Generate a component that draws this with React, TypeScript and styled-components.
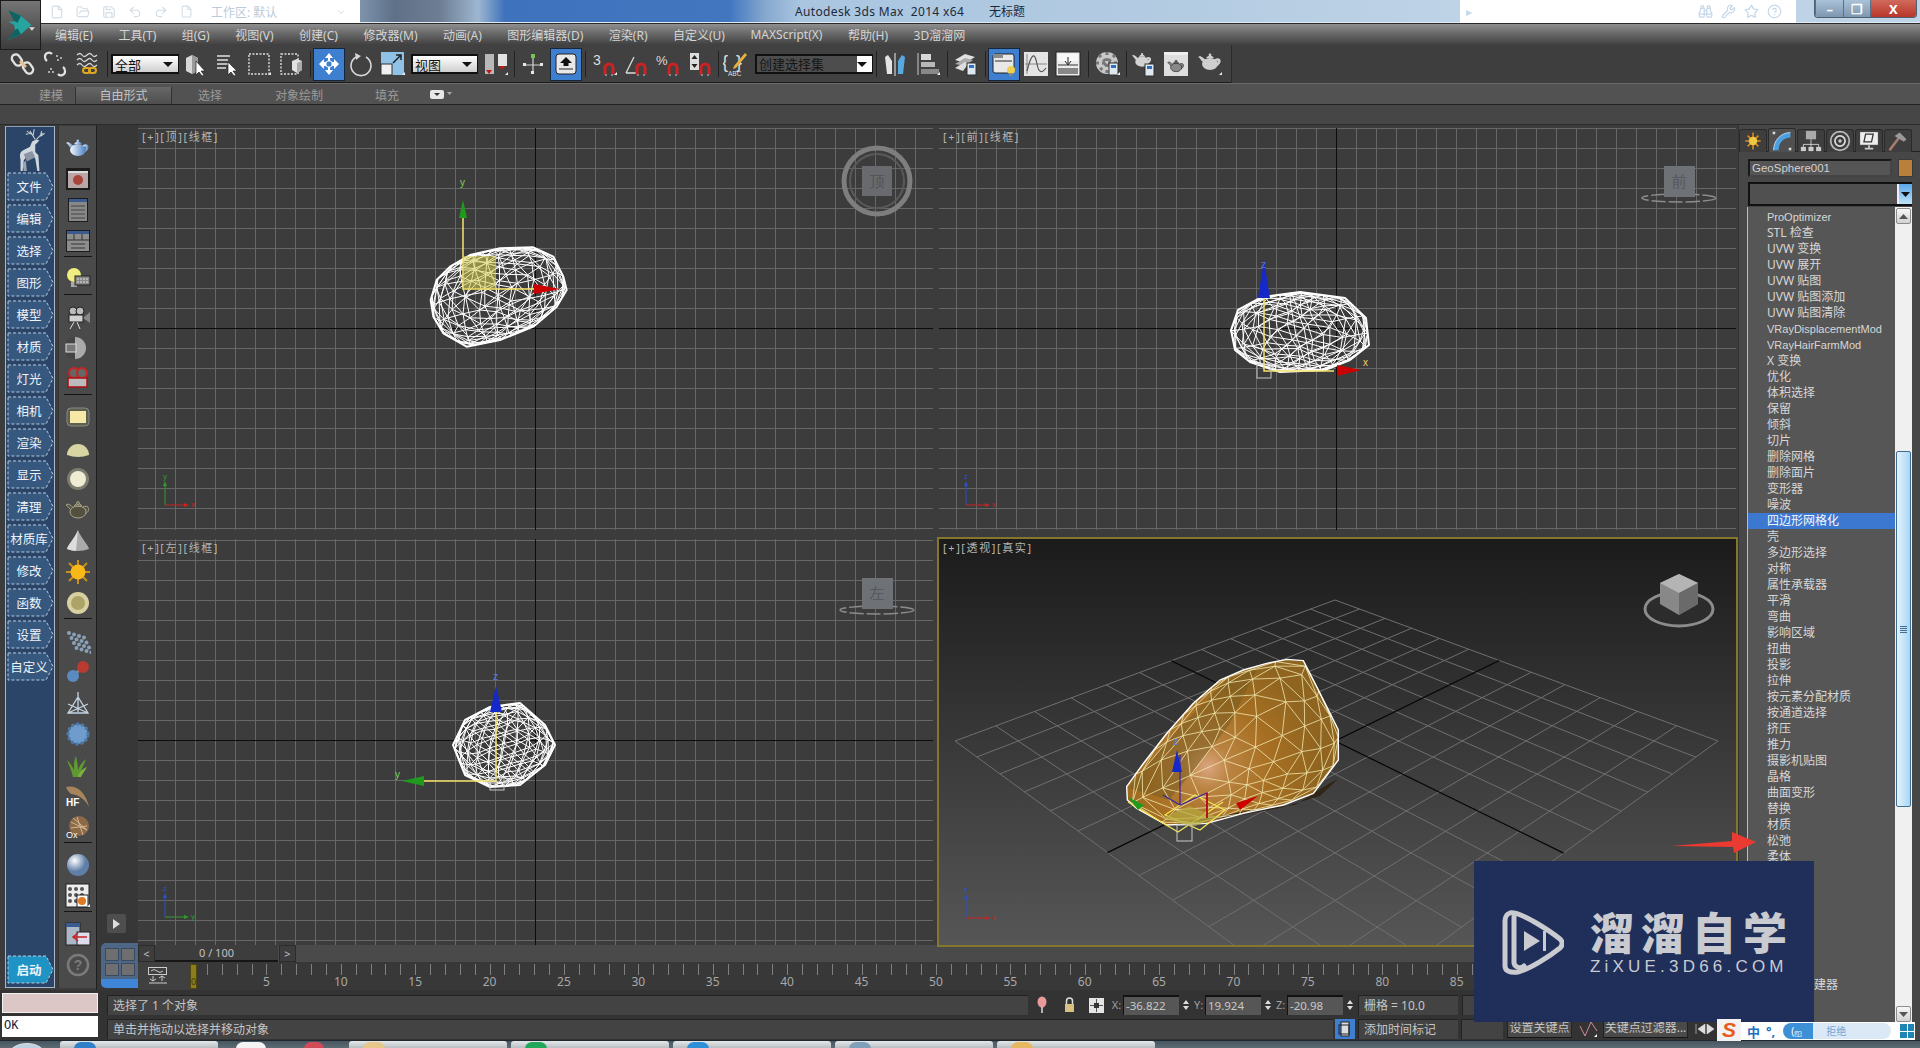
import React from 'react';
import styled, { createGlobalStyle } from 'styled-components';
import { File, FolderOpen, Save, Undo2, Redo2, Binoculars, Wrench, Star, CircleHelp, ChevronDown } from 'lucide-react';

const FONT = `"Noto Sans", "Noto Sans CJK SC", sans-serif`;

const Global = createGlobalStyle`
  html, body { margin: 0; padding: 0; background: #3a3a3a; }
  * { box-sizing: border-box; }
  body { font-family: ${FONT}; font-size: 12px; color: #ccc; overflow: hidden; }
`;

const Root = styled.div`position: relative; width: 1920px; height: 1048px; overflow: hidden; display: flex; flex-direction: column; background: #3c3c3c;`;

/* ---------- title ---------- */
const TitleBar = styled.div`
  height: 23px; display: flex; align-items: stretch; position: relative;
  background: linear-gradient(90deg, #7d93ac 360px, #5f7088 395px, #6d7e94 440px, #9db6d0 478px, #3f72bc 505px, #4277c0 730px, #86a8cf 765px, #a9c5e0 800px, #b4cce2 1200px, #bfd3e7 1460px);
  box-shadow: inset 0 -1px 0 #dfeaf4;
`;
const Qat = styled.div`width: 320px; margin-left: 40px; background: #fff; display: flex; align-items: center; gap: 12px; padding-left: 10px; color: #d2dde7; font-size: 12px;`;
const QatLabel = styled.span`margin-left: 6px; color: #bccad8; width: 112px;`;
const TitleText = styled.div`position: absolute; left: 795px; top: 1px; line-height: 21px; color: #1e2a38; font-size: 12px; white-space: pre; display: flex;`;
const TitleApp = styled.span`letter-spacing: 0.35px; width: 194px;`;
const InfoCenter = styled.div`margin-left: auto; margin-right: 124px; width: 336px; background: #fff; display: flex; align-items: center; color: #c6d8ea; padding: 0 14px 0 6px;`;
const InfoIcons = styled.div`margin-left: auto; display: flex; gap: 8px; align-items: center;`;
const WinButtons = styled.div`position: absolute; right: 3px; top: 0; width: 103px; height: 18px; display: flex; border: 1px solid #4d5f72; border-top: 0; border-radius: 0 0 4px 4px; overflow: hidden;`;
const WinBtn = styled.div<{ $w: number; $close?: boolean }>`
  width: ${p => p.$w}px; display: flex; align-items: center; justify-content: center;
  border-left: 1px solid #5d6f82; color: #fff; font-size: 13px; font-weight: 700;
  background: ${p => p.$close ? 'linear-gradient(#d06a5c, #b8352a)' : 'linear-gradient(#aac2d8, #7f97ae)'};
`;
const AppButton = styled.div`position: absolute; left: 0; top: 0; width: 41px; height: 50px; background: linear-gradient(#757575, #3c3c3c); border: 1px solid #1c1c1c; z-index: 3; display: flex; align-items: center; justify-content: center;`;

/* ---------- menu ---------- */
const MenuBar = styled.div`height: 22px; background: linear-gradient(#8f8f8f, #6d6d6d 40%, #404040); border-top: 1px solid #2a2a2a; display: flex; align-items: center; padding-left: 55px; gap: 25.5px; color: #d4d4d4; font-size: 12px; white-space: nowrap;`;

/* ---------- toolbar ---------- */
const Toolbar = styled.div`height: 38px; width: 1232px; display: flex; align-items: center; padding-left: 7px; background: #414141; border-right: 1px solid #2a2a2a; box-shadow: inset 0 -1px 0 #1c1c1c;`;
const ToolbarRow = styled.div`height: 38px; background: #3e3e3e; display: flex;`;
const ToolBtn = styled.div<{ $on?: boolean }>`
  width: 32px; height: 33px; display: flex; align-items: center; justify-content: center; flex: none;
  background: ${p => p.$on ? '#3f7fd0' : 'transparent'};
  box-shadow: ${p => p.$on ? 'inset 0 0 0 1px #16263c' : 'none'};
`;
const Gap = styled.div<{ $w: number; $line?: boolean }>`
  width: ${p => p.$w}px; height: 26px; flex: none; position: relative;
  ${p => p.$line ? `background: linear-gradient(#222,#222) center / 1px 100% no-repeat;` : ''}
`;
const Select = styled.div<{ $w: number; $dark?: boolean }>`
  width: ${p => p.$w}px; height: 20px; flex: none; background: ${p => p.$dark ? '#fff' : 'linear-gradient(#fff, #cfcfcf)'};
  border: 2px solid #111; border-right-width: 1px; display: flex; align-items: center; color: #111; font-size: 13px; padding-left: 2px; position: relative;
`;
const SelectInner = styled.div`flex: 1; height: 100%; background: #4d4d4d; color: #151515; line-height: 16px; padding-left: 2px; margin-left: -2px;`;
const SelectArrow = styled.span`margin-left: auto; margin-right: 5px; width: 0; height: 0; border-left: 5px solid transparent; border-right: 5px solid transparent; border-top: 5px solid #111;`;

/* ---------- ribbon ---------- */
const RibbonTabs = styled.div`height: 22px; background: #525252; display: flex; padding-left: 27px; border-top: 1px solid #6b6b6b; border-bottom: 1px solid #222; color: #9a9a9a; font-size: 12px; position: relative;`;
const RibbonTab = styled.div<{ $w: number; $on?: boolean }>`
  width: ${p => p.$w}px; text-align: center; line-height: 17px; margin-top: 3px; height: 17px;
  background: ${p => p.$on ? 'linear-gradient(#686868, #4e4e4e)' : 'transparent'};
  color: ${p => p.$on ? '#c4c4c4' : '#9a9a9a'};
  box-shadow: ${p => p.$on ? 'inset 1px 0 0 #333, inset -1px 0 0 #333' : 'none'};
`;
const RibbonPanel = styled.div`height: 20px; background: #464646; border-bottom: 1px solid #2a2a2a;`;
const TabIcon = styled.div`display: flex; align-items: center; gap: 3px; padding-left: 6px;`;

/* ---------- main ---------- */
const Main = styled.div`flex: 1; display: flex; min-height: 0;`;
const LeftArea = styled.div`width: 1738px; display: flex; flex-direction: column;`;
const UpperRow = styled.div`height: 865px; display: flex;`;
const BlueRail = styled.div`width: 50px; height: 862px; margin: 1px 0 0 5px; background: #2a4568; border: 1px solid #a9b8c8; border-top-color: #8a9cb0; display: flex; flex-direction: column; align-items: flex-start; position: relative;`;
const DeerBox = styled.div`height: 45px; width: 100%; display: flex; align-items: center; justify-content: center;`;
const Chip = styled.div<{ $start?: boolean }>`
  position: relative; width: 47px; height: 29px; margin: 0 0 3px 1px; display: flex; align-items: center; justify-content: center;
  padding-right: 3px; color: #eef3f8; font-size: 12.5px; white-space: nowrap;
  font-weight: ${p => p.$start ? 700 : 400};
`;
const ChipLabel = styled.span`position: relative; letter-spacing: 0;`;
const ChipShape = styled.svg`position: absolute; inset: 0;`;
const Spacer = styled.div`flex: 1;`;
const IconRail = styled.div`width: 38px; margin: 1px 0 0 3px; background: #4a4a4a; border-left: 1px solid #333; height: 862px; padding-top: 6px; display: flex; flex-direction: column; align-items: center;`;
const RailCell = styled.div`height: 31px; width: 100%; display: flex; align-items: center; justify-content: center; flex: none;`;
const RailSep = styled.div`height: 1px; width: 28px; background: #151515; margin-bottom: 6px; flex: none;`;
const DarkRail = styled.div`width: 42px; border-left: 1px solid #1f1f1f; background: #373737; display: flex; flex-direction: column; align-items: flex-end;`;
const PlayBtn = styled.div`width: 19px; height: 19px; margin: 0 12px 10px 0; background: #4e4e4e; border-radius: 2px; display: flex; align-items: center; justify-content: center;`;
const LayoutBtn = styled.div`width: 37px; height: 45px; margin-bottom: 2px; border-radius: 5px 0 0 5px; background: linear-gradient(#4e6787 80%, #3f86d8 80%); display: grid; grid-template-columns: 14px 14px; grid-template-rows: 13px 13px; gap: 2px; padding: 5px 0 0 4px;`;
const LayoutCell = styled.div`background: #6f6f72; border: 1px solid #3a4a5c;`;

const ContentCol = styled.div`width: 1600px; display: flex; flex-direction: column;`;
const ViewGrid = styled.div`display: grid; grid-template-columns: 795px 797px; grid-template-rows: 402px 406px; gap: 9px 6px; padding-top: 3px;`;
const Viewport = styled.div<{ $ax: number; $ay: number }>`
  position: relative; overflow: hidden; background-color: #3c3c3c;
  background-image: linear-gradient(#0c0c0c,#0c0c0c), linear-gradient(#0c0c0c,#0c0c0c), linear-gradient(#676767 1px, transparent 1px), linear-gradient(90deg, #676767 1px, transparent 1px);
  background-size: 1px 100%, 100% 1px, 20px 20px, 20px 20px;
  background-repeat: no-repeat, no-repeat, repeat, repeat;
  background-position: ${p => p.$ax}px 0, 0 ${p => p.$ay}px, 0 ${p => p.$ay % 20}px, ${p => p.$ax % 20}px 0;
`;
const PerspView = styled.div`position: relative; overflow: hidden; background: linear-gradient(#1b1b1b, #565656); outline: 2px solid #85762f; outline-offset: 0;`;
const ViewSvg = styled.svg`position: absolute; inset: 0; width: 100%; height: 100%;`;
const ViewLabel = styled.div`position: absolute; left: 4px; top: 1px; color: #b4b4b4; font-size: 11px; line-height: 16px; letter-spacing: 1.6px; white-space: nowrap;`;

const SliderRow = styled.div`height: 17px; display: flex; background: #4a4a4a; color: #c0c0c0; font-size: 11px; align-items: stretch;`;
const SliderEnd = styled.div`width: 17px; background: #3d3d3d; text-align: center; line-height: 16px; border: 1px solid #2c2c2c;`;
const SliderThumb = styled.div`width: 123px; background: #3d3d3d; border-bottom: 2px solid #161616; text-align: center; line-height: 16px; margin-right: 1px;`;
const TrackRow = styled.div`height: 28px; display: flex; background: #404040;`;
const TrackIcon = styled.div`width: 54px; display: flex; align-items: center; justify-content: flex-start; padding-left: 10px;`;
const Ruler = styled.div`
  flex: 1; position: relative; display: flex; align-items: flex-end; padding-bottom: 0; background-color: #383838;
  background-image: repeating-linear-gradient(90deg, #808080 0 1px, transparent 1px 14.88px);
  background-size: 100% 11px; background-repeat: no-repeat; background-position: 0 2px; color: #a8a8a8; font-size: 12px;
`;
const RulerCell = styled.div`width: 74.4px; flex: none; display: flex; justify-content: flex-end; line-height: 16px;`;
const RulerNum = styled.span`transform: translateX(50%);`;
const KeyMark = styled.div`position: absolute; left: -2px; top: 2px; width: 7px; height: 25px; background: #8d7d1c; border: 1px solid #4f4610; color: #3d3508; font-size: 9px; text-align: center; line-height: 34px; overflow: hidden;`;

/* ---------- status ---------- */
const StatusArea = styled.div`height: 50px; display: flex; background: #333;`;
const Listener = styled.div`width: 107px; padding: 3px 9px 0 2px; display: flex; flex-direction: column; gap: 3px;`;
const ListenerTop = styled.div`height: 20px; background: #dcc6c6; border: 1px solid #f2f2f2;`;
const ListenerBottom = styled.div`height: 21px; background: #fff; color: #10103a; font-family: "Liberation Mono", monospace; font-size: 12px; line-height: 21px; padding-left: 2px;`;
const StatusRows = styled.div`flex: 1; display: flex; flex-direction: column; gap: 4px; padding-top: 5px;`;
const StatusRow = styled.div`height: 20px; display: flex; align-items: stretch; flex: none; color: #c6c6c6; font-size: 12px;`;
const StatusBox = styled.div<{ $w: number; $ml?: number }>`
  width: ${p => p.$w}px; margin-left: ${p => p.$ml ?? 0}px; flex: none; background: #434343; border-top: 1px solid #222; border-left: 1px solid #222;
  padding-left: 5px; line-height: 20px; white-space: nowrap; overflow: hidden;
`;
const IconSlot = styled.div<{ $w: number; $ml?: number; $on?: boolean }>`
  width: ${p => p.$w}px; margin-left: ${p => p.$ml ?? 0}px; flex: none; display: flex; align-items: center; justify-content: center;
  background: ${p => p.$on ? '#3f7fd0' : 'transparent'};
`;
const AxisLabel = styled.div`width: 13px; flex: none; color: #a0a0a0; font-size: 11px; line-height: 20px; text-align: center;`;
const Field = styled.div`width: 56px; flex: none; background: #565656; border-top: 2px solid #111; border-left: 1px solid #111; color: #c8c8c8; font-size: 11.5px; line-height: 18px; padding-left: 2px;`;
const Spin = styled.div`width: 13px; flex: none; display: flex; flex-direction: column; align-items: center; justify-content: center; gap: 2px;`;
const SpinUp = styled.span`width: 0; height: 0; border-left: 3px solid transparent; border-right: 3px solid transparent; border-bottom: 4px solid #ddd;`;
const SpinDown = styled.span`width: 0; height: 0; border-left: 3px solid transparent; border-right: 3px solid transparent; border-top: 4px solid #ddd;`;
const KeyBtn = styled.div<{ $w: number; $ml?: number }>`
  width: ${p => p.$w}px; margin-left: ${p => p.$ml ?? 0}px; flex: none; background: #4a4a4a; border-bottom: 1px solid #161616; border-left: 1px solid #222; border-right: 1px solid #222; text-align: center; line-height: 18px; height: 19px; white-space: nowrap; overflow: hidden;
`;

/* ---------- right panel ---------- */
const RightPanel = styled.div`width: 182px; background: #474747; display: flex; flex-direction: column; padding-top: 3px; position: relative; border-left: 1px solid #333;`;
const PanelTabs = styled.div`height: 24px; display: flex; gap: 1px; padding-left: 0; border-bottom: 1px solid #222; flex: none;`;
const PanelTab = styled.div<{ $on?: boolean }>`
  width: 28px; height: ${p => p.$on ? 24 : 23}px; margin-top: ${p => p.$on ? 0 : 1}px; background: ${p => p.$on ? '#505050' : '#3e3e3e'}; border: 1px solid #2a2a2a; border-bottom: 0; border-radius: 3px 3px 0 0; display: flex; align-items: center; justify-content: center;
`;
const NameRow = styled.div`height: 18px; margin: 7px 0 0 9px; display: flex; flex: none;`;
const NameField = styled.div`width: 144px; background: #555; border: 2px solid #191919; border-right-color: #444; border-bottom-color: #444; color: #d0d0d0; font-family: "Liberation Sans", sans-serif; font-size: 11.5px; line-height: 14px; padding-left: 2px;`;
const Swatch = styled.div`width: 15px; margin-left: 6px; background: #b9803c; border: 1px solid #3a3a3a;`;
const StackBox = styled.div`height: 24px; margin: 5px 8px 0 9px; display: flex; background: #505050; border: 2px solid #111; border-right: 0; flex: none;`;
const StackArrow = styled.div`margin-left: auto; width: 15px; background: linear-gradient(#5aa8e8, #bfe2f8); display: flex; align-items: center; justify-content: center; border-left: 2px solid #eef;`;
const ListWrap = styled.div`height: 816px; margin: 1px 8px 0 8px; display: flex; border-left: 1px solid #bcbcbc; flex: none;`;
const ListRows = styled.div`flex: 1; background: #565656; overflow: hidden; padding-top: 2px;`;
const ListRow = styled.div<{ $on?: boolean; $latin?: boolean; $indent?: number }>`
  height: 16px; line-height: 16px; padding-left: ${p => p.$indent ?? 19}px; white-space: nowrap; color: ${p => p.$on ? '#f4f8ff' : '#d6d6d6'};
  font-size: ${p => p.$latin ? 11 : 12}px;
  font-family: ${p => p.$latin ? '"Liberation Sans", sans-serif' : 'inherit'};
  background: ${p => p.$on ? '#3c78d0' : 'transparent'};
`;
const ScrollTrack = styled.div`width: 17px; background: #f0f0f0; display: flex; flex-direction: column; align-items: center; flex: none;`;
const ScrollBtn = styled.div`width: 15px; height: 16px; margin-top: 1px; background: linear-gradient(#f6f6f6, #d2d2d2); border: 1px solid #8d8d8d; border-radius: 2px; display: flex; align-items: center; justify-content: center; flex: none;`;
const ScrollGap = styled.div<{ $h: number }>`height: ${p => p.$h}px; flex: none;`;
const ScrollThumb = styled.div`width: 15px; height: 356px; flex: none; background: linear-gradient(90deg, #e4f3fd, #a8d6f5); border: 1px solid #3f6f92; border-radius: 2px; display: flex; align-items: center; justify-content: center;`;
const Grip = styled.div`width: 7px; height: 7px; background: repeating-linear-gradient(#3f6f92 0 1px, transparent 1px 2px);`;

/* ---------- overlays ---------- */
const RedArrow = styled.svg`position: absolute; left: 1666px; top: 826px; z-index: 5;`;
const Watermark = styled.div`position: absolute; left: 1474px; top: 861px; width: 340px; height: 161px; background: #1f2f5a; display: flex; align-items: center; padding: 0 0 0 26px; gap: 26px; z-index: 6;`;
const MarkText = styled.div`display: flex; flex-direction: column; align-items: flex-start; color: #c9cbd0;`;
const MarkTitle = styled.div`font-family: "Noto Sans CJK SC", sans-serif; font-size: 44px; font-weight: 900; letter-spacing: 7px; line-height: 50px; white-space: nowrap;`;
const MarkSub = styled.div`font-family: "Liberation Sans", sans-serif; font-size: 17px; letter-spacing: 4.2px; line-height: 20px; white-space: nowrap; margin-top: 1px;`;
const ImeBar = styled.div`position: absolute; left: 1717px; top: 1022px; width: 198px; height: 18px; background: #fff; display: flex; align-items: center; z-index: 7; padding-left: 0; color: #1f6fc0;`;
const ImeS = styled.div`width: 24px; height: 22px; margin-top: -3px; background: #f2f2f2; color: #e8591c; font-family: "Liberation Sans", sans-serif; font-weight: 900; font-size: 21px; line-height: 22px; text-align: center; font-style: italic;`;
const ImeText = styled.span`font-weight: 700; font-size: 13px; margin-left: 6px;`;
const ImePill = styled.div`margin-left: 8px; width: 108px; height: 16px; border-radius: 8px; background: linear-gradient(90deg, #3d8fd6 28%, #dbe9f6 28%); color: #fff; font-size: 10px; line-height: 16px; padding-left: 8px; display: flex; align-items: center; gap: 24px;`;
const ImeHint = styled.span`color: #6fa8d8; font-size: 10px;`;
const ImeGrid = styled.div`margin-left: auto; width: 14px; height: 14px; margin-right: 1px; display: grid; grid-template-columns: 1fr 1fr; gap: 1px;`;
const ImeDot = styled.div`background: #1f86b4;`;

const Taskbar = styled.div`height: 8px; display: flex; background: linear-gradient(#46555f, #5d6b74); border-top: 1px solid #20282e; overflow: hidden;`;
const Orb = styled.div`width: 34px; height: 20px; margin: 2px 0 0 10px; border-radius: 50%; background: #bcd0e2; border: 1px solid #ddd; flex: none;`;
const TaskTab = styled.div<{ $w: number; $ml: number }>`width: ${p => p.$w}px; margin-left: ${p => p.$ml}px; flex: none; background: linear-gradient(#e4e8ea, #b8bec2); border-radius: 3px 3px 0 0; display: flex; padding-left: 14px;`;
const TaskDot = styled.div<{ $c: string; $w?: number; $ml?: number }>`width: ${p => p.$w ?? 22}px; height: 16px; margin-left: ${p => p.$ml ?? 0}px; margin-top: 1px; border-radius: 7px; background: ${p => p.$c}; flex: none;`;

/* ---------- icons ---------- */
const I: React.FC<{ children: React.ReactNode; s?: number; v?: string }> = ({ children, s = 26, v = '0 0 26 26' }) => (
  <svg width={s} height={s} viewBox={v}>{children}</svg>
);
const Pot: React.FC<{ c?: string; st?: string }> = ({ c = '#cfd3d8', st = 'none' }) => (
  <g fill={c} stroke={st}>
    <path d="M7 13C4 13 4 9 1 8l2-1c3 1 4 3 6 4z" />
    <path d="M18 10c6-3 8 4 2 7l-1-2c3-2 2-4-1-3z" />
    <ellipse cx="13" cy="15" rx="8" ry="6" />
    <path d="M9 9h8l-2-2h-4z" /><circle cx="13" cy="6" r="1.4" />
  </g>
);
const corner = <path d="M22 24l3-3v3z" fill="#eee" />;
const Magnet = () => <g fill="none" stroke="#d8d8d8" strokeWidth="2"><path d="M13 24v-7a4 4 0 0 1 8 0v7" stroke="#c22" strokeWidth="3" /><path d="M13 24h2M19 24h2" stroke="#789" strokeWidth="2" /></g>;

const ToolIcons: Record<string, React.ReactNode> = {
  link: <I><g fill="none" stroke="#e2e2e2" strokeWidth="2.4"><rect x="3" y="3" width="8" height="12" rx="4" transform="rotate(-35 7 9)" /><rect x="14" y="11" width="8" height="12" rx="4" transform="rotate(-35 18 17)" /></g><path d="M10 10l6 6" stroke="#e8c090" strokeWidth="2.5" /></I>,
  unlink: <I><g fill="none" stroke="#e2e2e2" strokeWidth="2.2"><path d="M10 3a4 4 0 0 0-7 3 5 5 0 0 0 2 4" /><path d="M16 23a4 4 0 0 0 7-3 5 5 0 0 0-2-4" /></g><g fill="#aaa"><rect x="14" y="4" width="2" height="2" /><rect x="18" y="6" width="2" height="2" /><rect x="15" y="8" width="2" height="2" /><rect x="8" y="17" width="2" height="2" /><rect x="6" y="20" width="2" height="2" /><rect x="10" y="20" width="2" height="2" /></g></I>,
  bind: <I><g fill="none" stroke="#d4d4d4" strokeWidth="1.3"><path d="M3 4q3-3 5 0t5 0 5 0 5 0" /><path d="M3 9q3-3 5 0t5 0 5 0 5 0" /><path d="M3 14q3-3 5 0t5 0 5 0 5 0" /></g><g fill="none" stroke="#e0a820" strokeWidth="2"><rect x="9" y="17" width="7" height="5" rx="2.4" /><rect x="15" y="17" width="7" height="5" rx="2.4" /></g></I>,
  selObj: <I><path d="M4 7l6-3 6 3v13l-6 3-6-3z" fill="#d8d8d8" /><path d="M10 4l6 3v13l-6 3z" fill="#9a9a9a" /><path d="M14 10v14l3-3 3 4 2-1-3-4h4z" fill="#fff" stroke="#222" strokeWidth=".7" /></I>,
  selName: <I><path d="M3 5h13M3 9h11M3 13h13M3 17h9" stroke="#e0e0e0" strokeWidth="1.4" /><path d="M14 11v13l3-3 3 4 2-1-3-4h4z" fill="#fff" stroke="#222" strokeWidth=".7" /></I>,
  rect: <I><rect x="3" y="3" width="20" height="20" fill="none" stroke="#e0e0e0" strokeWidth="1.4" strokeDasharray="2 1.5" />{corner}</I>,
  win: <I><rect x="3" y="3" width="17" height="20" fill="none" stroke="#e0e0e0" strokeWidth="1.4" strokeDasharray="2 1.5" /><path d="M14 10l5-2 5 2v9l-5 3-5-3z" fill="#e2e2e2" /><path d="M19 12l5-2v9l-5 3z" fill="#aaa" /></I>,
  move: <I><path d="M13 2l4 5h-3v4h4v-3l5 5-5 5v-3h-4v4h3l-4 5-4-5h3v-4H8v3l-5-5 5-5v3h4V7H9z" fill="#fff" /><rect x="10" y="10" width="6" height="6" rx="2" fill="#3f7fd0" stroke="#fff" /></I>,
  rotate: <I><path d="M8 6a10 10 0 1 0 10 0" fill="none" stroke="#d6d6d6" strokeWidth="1.6" /><path d="M7 2l6 3-5 4z" fill="#d6d6d6" /></I>,
  scale: <I><rect x="1" y="1" width="23" height="23" fill="#8fc2e6" /><rect x="1" y="13" width="11" height="11" fill="#f0f0f0" stroke="#333" /><path d="M13 12l8-8M16 4h5v5" fill="none" stroke="#222" strokeWidth="1.5" />{corner}</I>,
  pivot: <I><rect x="2" y="3" width="9" height="20" fill="#b8b8b8" /><rect x="15" y="3" width="9" height="12" fill="#e2e2e2" /><path d="M6 23l-3-4h6z M19 19l-3-4h6z" fill="#c01818" />{corner}</I>,
  axis: <I><path d="M13 4v18M3 14h20" stroke="#d4d4d4" strokeWidth="1.2" /><rect x="11" y="3" width="4" height="4" fill="#7cc050" /><rect x="3" y="12" width="3" height="3" fill="#e8e8e8" /><rect x="20" y="12" width="3" height="3" fill="#e8e8e8" /><rect x="11" y="20" width="3" height="3" fill="#e8e8e8" /></I>,
  manip: <I><rect x="3" y="3" width="20" height="20" rx="3" fill="#e8e8e8" stroke="#222" /><path d="M13 6l6 6h-3.500v3h-5v-3H7z" fill="#111" /><rect x="6" y="17" width="14" height="2" fill="#888" /></I>,
  snap3: <I><text x="1" y="14" fontSize="14" fill="#ddd" fontFamily="Liberation Sans">3</text><Magnet />{corner}</I>,
  snapA: <I><path d="M2 22L10 6M2 22h11" stroke="#ddd" fill="none" strokeWidth="1.3" /><Magnet /></I>,
  snapP: <I><text x="0" y="14" fontSize="13" fill="#ddd" fontFamily="Liberation Sans">%</text><Magnet /></I>,
  snapS: <I><rect x="2" y="2" width="9" height="17" fill="#ddd" /><path d="M6.500 4l3 4h-6zM6.500 17l3-4h-6z" fill="#222" /><Magnet /></I>,
  named: <I><text x="-1" y="17" fontSize="18" fill="#ddd" fontFamily="Liberation Sans">{'{'}</text><text x="13" y="17" fontSize="18" fill="#ddd" fontFamily="Liberation Sans">{'}'}</text><path d="M22 2L11 15l-1 3 3-1L24 4z" fill="#e8b040" /><text x="5" y="25" fontSize="6.500" fill="#ddd" fontFamily="Liberation Sans">ABC</text></I>,
  mirror: <I><path d="M3 6l3-2 4 6v13H5z" fill="#e4e4e4" /><path d="M13 2v23" stroke="#eee" /><path d="M23 6l-3-2-4 6v13h5z" fill="#5aa8e0" /></I>,
  align: <I><path d="M3 2v22" stroke="#ccc" /><rect x="6" y="3" width="10" height="6" fill="#d8d8d8" /><rect x="6" y="11" width="14" height="5" fill="#b8b8b8" /><rect x="6" y="18" width="18" height="5" fill="#888" />{corner}</I>,
  layers: <I><path d="M2 9l10-6 10 3-10 6z" fill="#e0e0e0" /><path d="M2 13l10-6 8 2-8 6z" fill="#aaa" /><path d="M2 17l10-6 4 1-6 8z" fill="#ddd" /><rect x="14" y="12" width="9" height="12" fill="#dfe8f0" stroke="#333" /><rect x="16" y="14" width="5" height="3" fill="#2f6fc0" /></I>,
  scene: <I><rect x="2" y="3" width="21" height="19" rx="2" fill="#e8e8e8" stroke="#222" /><rect x="2" y="3" width="10" height="4" fill="#8a8a8a" /><rect x="4" y="9" width="17" height="2" fill="#8a8a8a" /><circle cx="20" cy="19" r="4" fill="#f0d050" /><rect x="18.500" y="22" width="3" height="3" fill="#888" /></I>,
  curve: <I><rect x="1" y="1" width="24" height="24" fill="#e4e4e4" /><path d="M4 3v20M2 13h22" stroke="#888" /><path d="M4 20C9 0 12 2 14 13s6 8 9 4" fill="none" stroke="#555" strokeWidth="1.2" /></I>,
  schem: <I><rect x="1" y="1" width="24" height="24" fill="#ececec" stroke="#222" /><rect x="3" y="3" width="20" height="7" fill="#f8f8f8" /><rect x="3" y="17" width="20" height="6" fill="#888" /><path d="M13 6v7M10 10l3 4 3-4" stroke="#222" fill="none" /><path d="M3 14h20" stroke="#333" /></I>,
  mat: <I><circle cx="12" cy="12" r="11" fill="#c8c8c8" /><path d="M12 1v22M1 12h22M4 4l16 16M20 4L4 20" stroke="#777" strokeWidth="3" strokeDasharray="3 3" /><rect x="14" y="12" width="9" height="12" fill="#dfe8f0" stroke="#333" /><rect x="16" y="14" width="5" height="3" fill="#2f6fc0" />{corner}</I>,
  renderSet: <I><g transform="translate(0 -2) scale(.85)"><Pot c="#d2d2d2" /></g><rect x="14" y="13" width="9" height="12" fill="#dfe8f0" stroke="#333" /><rect x="16" y="15" width="5" height="3" fill="#2f6fc0" /></I>,
  renderFrame: <I><rect x="1" y="1" width="24" height="24" fill="#dedede" /><rect x="1" y="1" width="24" height="3" fill="#eee" /><g transform="translate(4 6) scale(.7)"><Pot c="#888" st="#333" /></g></I>,
  render: <I><g transform="translate(0 -2)"><Pot c="#cfcfcf" /></g>{corner}</I>,
};

const railIcons: (React.ReactNode | 'sep')[] = [
  <I key="a"><defs><linearGradient id="bp" x1="0" y1="0" x2="1" y2="0"><stop offset="0" stopColor="#f4f8ff" /><stop offset="1" stopColor="#4a7fc0" /></linearGradient></defs><Pot c="url(#bp)" /></I>,
  <I key="b"><rect x="1" y="2" width="24" height="22" fill="#1c1c1c" /><rect x="3" y="5" width="20" height="17" fill="#b9a6a6" /><path d="M3 5h20v2H3z" fill="#dcdcdc" /><circle cx="13" cy="14" r="5" fill="#a8443a" /></I>,
  <I key="c"><rect x="3" y="1" width="20" height="24" fill="#1c1c1c" /><rect x="4" y="2" width="18" height="3" fill="#3a5a90" /><rect x="4" y="5" width="18" height="19" fill="#888" /><path d="M6 9h14M6 13h14M6 17h14M6 21h14" stroke="#444" /></I>,
  <I key="d"><rect x="1" y="2" width="24" height="22" fill="#1c1c1c" /><rect x="2" y="3" width="22" height="3" fill="#3a5a90" /><rect x="2" y="6" width="22" height="17" fill="#8d8d8d" /><path d="M2 12h22M9 6v6M17 6v6M6 16h14M6 20h14" stroke="#333" /></I>,
  'sep',
  <I key="e"><circle cx="9" cy="9" r="7" fill="#f0ee80" /><rect x="6" y="16" width="6" height="5" fill="#aaa" /><rect x="10" y="10" width="15" height="9" fill="#888" stroke="#222" /><path d="M12 13h11M12 16h11" stroke="#ddd" strokeDasharray="2 1" /></I>,
  'sep',
  <I key="f"><circle cx="8" cy="7" r="4" fill="#bbb" stroke="#222" /><circle cx="15" cy="7" r="4" fill="#bbb" stroke="#222" /><rect x="4" y="11" width="14" height="7" fill="#d0d0d0" stroke="#222" /><path d="M18 14l7-6v11z" fill="#888" /><path d="M9 18l-4 7M12 18l3 7" stroke="#ddd" /></I>,
  <I key="g"><path d="M10 2a11 11 0 0 1 0 22z" fill="#aaa" /><path d="M10 2a11 11 0 0 0 0 22z" fill="#444" /><rect x="1" y="9" width="10" height="8" fill="#777" stroke="#ddd" /></I>,
  <I key="h"><circle cx="9" cy="7" r="5" fill="#666" stroke="#c22" strokeWidth="2" /><circle cx="17" cy="7" r="5" fill="#666" stroke="#c22" strokeWidth="2" /><rect x="3" y="12" width="19" height="9" fill="#bbb" stroke="#a11" strokeWidth="1.500" /></I>,
  'sep',
  <I key="i"><rect x="2" y="4" width="22" height="18" rx="4" fill="#5f5f50" stroke="#888" /><rect x="5" y="7" width="16" height="12" fill="#f6e8a6" /></I>,
  <I key="j"><path d="M2 20a11 11 0 0 1 22 0q-11 4-22 0z" fill="#d8d4a4" /></I>,
  <I key="k"><circle cx="13" cy="13" r="11" fill="#7c7c70" /><circle cx="13" cy="13" r="8" fill="#f0ecd4" /></I>,
  <I key="l"><g transform="translate(0 0)"><Pot c="#54503f" st="#a8a48c" /></g></I>,
  <I key="m"><path d="M13 2c3 8 11 16 11 19q-11 4-22 0C2 18 10 10 13 2z" fill="#aaa" /><path d="M13 2c-3 8-11 16-11 19q5 2 9 2z" fill="#ddd" /></I>,
  <I key="n"><g stroke="#c89018" strokeWidth="2"><path d="M13 1v24M1 13h24M4 4l18 18M22 4L4 22" /></g><circle cx="13" cy="13" r="7.500" fill="#f8b818" /></I>,
  <I key="o"><circle cx="13" cy="13" r="11" fill="#d8d0a0" /><circle cx="13" cy="13" r="7" fill="#9a9050" opacity=".7" /></I>,
  'sep',
  <I key="p"><g fill="#8aa0b8">{[0, 1, 2, 3].map(r => [0, 1, 2, 3].map(c => <circle key={`${r}${c}`} cx={4 + c * 5 + r * 2.500} cy={5 + r * 5 + c * 1.500} r="2" />))}</g></I>,
  <I key="q"><path d="M8 17l10-9" stroke="#888" strokeWidth="3" /><circle cx="18" cy="8" r="6" fill="#b83a30" /><circle cx="8" cy="17" r="6" fill="#5a8ac0" /></I>,
  <I key="r"><g fill="none" stroke="#c4d4e4" strokeWidth="1.300"><path d="M13 2v20M3 23l10-16 10 16zM3 23l20-9M23 23L3 14" /></g></I>,
  <I key="s"><circle cx="13" cy="13" r="10" fill="#6f9ccc" stroke="#4a7aac" strokeWidth="3" strokeDasharray="3 2" /></I>,
  <I key="t"><path d="M8 25C6 16 3 12 2 8c3 3 5 6 7 10 0-6 0-10 2-14 1 5 2 9 2 14 2-5 4-8 8-11-2 6-5 10-6 18z" fill="#5f9a30" /><path d="M13 25c1-5 4-8 9-10-2 4-5 7-6 10z" fill="#7cb040" /></I>,
  <I key="u"><path d="M1 4c10-3 20 5 23 20-4-8-10-12-18-13C4 9 2 7 1 4z" fill="#a8845c" /><text x="1" y="23" fontSize="10" fontWeight="700" fill="#fff" fontFamily="Liberation Sans">HF</text></I>,
  <I key="v"><circle cx="14" cy="12" r="10" fill="#8c6a48" /><path d="M6 8l16 8M8 4l14 12M6 14l16-2M12 3l6 18" stroke="#d4b890" /><text x="1" y="24" fontSize="9" fill="#fff" fontFamily="Liberation Sans">Ox</text></I>,
  'sep',
  <I key="w"><defs><radialGradient id="sph" cx=".35" cy=".3"><stop offset="0" stopColor="#fff" /><stop offset="1" stopColor="#5f7fa8" /></radialGradient></defs><circle cx="13" cy="13" r="11" fill="url(#sph)" /></I>,
  <I key="x"><rect x="1" y="1" width="23" height="23" fill="#eee" stroke="#222" /><g fill="#555">{[0, 1, 2].map(r => <React.Fragment key={r}><circle cx="5" cy={6 + r * 6} r="2" /><circle cx="11" cy={6 + r * 6} r="2" /><circle cx="17" cy={6 + r * 6} r="2" /></React.Fragment>)}</g><rect x="12" y="12" width="11" height="12" fill="#fff" stroke="#222" /><circle cx="17" cy="18" r="4" fill="#e07a20" />{corner}</I>,
  'sep',
  <I key="y"><rect x="1" y="2" width="14" height="22" fill="#aab8c8" stroke="#222" /><rect x="1" y="2" width="14" height="4" fill="#3a5a90" /><rect x="12" y="11" width="13" height="13" fill="#dde" stroke="#222" /><path d="M22 16H9M13 12l-5 4 5 4" stroke="#c22" fill="none" strokeWidth="1.500" /></I>,
  <I key="z"><circle cx="13" cy="13" r="10" fill="none" stroke="#7a7a7a" strokeWidth="2.500" /><text x="13" y="18" fontSize="14" fontWeight="700" textAnchor="middle" fill="#7a7a7a" fontFamily="Liberation Sans">?</text></I>,
];

const panelIcons = [
  <I key="0" s={20}><g stroke="#d88a20" strokeWidth="2"><path d="M13 2v22M3 13h20M6 6l14 14M20 6L6 20" /></g><circle cx="13" cy="13" r="5.500" fill="#f0c840" /></I>,
  <I key="1" s={22}><path d="M3 24C3 12 12 3 23 3v6C15 9 9 15 9 24z" fill="#4aa0e0" /><path d="M3 24C3 12 12 3 23 3" fill="none" stroke="#cde" /><rect x="2" y="2" width="3" height="3" fill="#ddd" /><rect x="21" y="21" width="3" height="3" fill="#ddd" /></I>,
  <I key="2" s={22}><rect x="7" y="1" width="12" height="10" fill="#aaa" /><path d="M13 11v5M4 21v-4h18v4M13 16v5" stroke="#ddd" fill="none" /><rect x="1" y="20" width="6" height="5" fill="#ccc" /><rect x="10" y="20" width="6" height="5" fill="#ccc" /><rect x="19" y="20" width="6" height="5" fill="#ccc" /></I>,
  <I key="3" s={22}><circle cx="13" cy="13" r="11" fill="none" stroke="#bbb" strokeWidth="2" /><circle cx="13" cy="13" r="6" fill="none" stroke="#ddd" strokeWidth="2" /><circle cx="13" cy="13" r="2" fill="#ccc" /></I>,
  <I key="4" s={22}><rect x="2" y="2" width="22" height="16" fill="#eee" stroke="#333" /><path d="M9 5h9l-2 9H7z" fill="none" stroke="#333" strokeWidth="1.500" /><path d="M8 22h10M13 18v4" stroke="#ccc" strokeWidth="2" /></I>,
  <I key="5" s={22}><path d="M3 24L15 8" stroke="#a87c70" strokeWidth="3" /><path d="M9 7l6-4 8 8-3 3-5-3z" fill="#9a9a9a" /></I>,
];

const mods = ['ProOptimizer', 'STL 检查', 'UVW 变换', 'UVW 展开', 'UVW 贴图', 'UVW 贴图添加', 'UVW 贴图清除', 'VRayDisplacementMod', 'VRayHairFarmMod', 'X 变换', '优化', '体积选择', '保留', '倾斜', '切片', '删除网格', '删除面片', '变形器', '噪波', '四边形网格化', '壳', '多边形选择', '对称', '属性承载器', '平滑', '弯曲', '影响区域', '扭曲', '投影', '拉伸', '按元素分配材质', '按通道选择', '挤压', '推力', '摄影机贴图', '晶格', '曲面变形', '替换', '材质', '松弛', '柔体'];
const chips = ['文件', '编辑', '选择', '图形', '模型', '材质', '灯光', '相机', '渲染', '显示', '清理', '材质库', '修改', '函数', '设置', '自定义'];
const menus = ['编辑(E)', '工具(T)', '组(G)', '视图(V)', '创建(C)', '修改器(M)', '动画(A)', '图形编辑器(D)', '渲染(R)', '自定义(U)', 'MAXScript(X)', '帮助(H)', '3D溜溜网'];

/* ---------- geometry ---------- */
type V = [number, number, number];
type P = [number, number];
function icosphere(levels: number) {
  const t = (1 + Math.sqrt(5)) / 2;
  const norm = (v: V): V => { const l = Math.hypot(v[0], v[1], v[2]); return [v[0] / l, v[1] / l, v[2] / l]; };
  const verts: V[] = ([[-1, t, 0], [1, t, 0], [-1, -t, 0], [1, -t, 0], [0, -1, t], [0, 1, t], [0, -1, -t], [0, 1, -t], [t, 0, -1], [t, 0, 1], [-t, 0, -1], [-t, 0, 1]] as V[]).map(norm);
  let faces = [[0, 11, 5], [0, 5, 1], [0, 1, 7], [0, 7, 10], [0, 10, 11], [1, 5, 9], [5, 11, 4], [11, 10, 2], [10, 7, 6], [7, 1, 8], [3, 9, 4], [3, 4, 2], [3, 2, 6], [3, 6, 8], [3, 8, 9], [4, 9, 5], [2, 4, 11], [6, 2, 10], [8, 6, 7], [9, 8, 1]];
  for (let l = 0; l < levels; l++) {
    const cache: Record<string, number> = {};
    const mid = (a: number, b: number) => {
      const k = a < b ? `${a}_${b}` : `${b}_${a}`;
      if (cache[k] !== undefined) return cache[k];
      const A = verts[a], B = verts[b];
      verts.push(norm([(A[0] + B[0]) / 2, (A[1] + B[1]) / 2, (A[2] + B[2]) / 2]));
      return (cache[k] = verts.length - 1);
    };
    const next: number[][] = [];
    faces.forEach(([a, b, c]) => {
      const ab = mid(a, b), bc = mid(b, c), ca = mid(c, a);
      next.push([a, ab, ca], [b, bc, ab], [c, ca, bc], [ab, bc, ca]);
    });
    faces = next;
  }
  const seen = new Set<string>();
  const edges: [number, number][] = [];
  faces.forEach(([a, b, c]) => ([[a, b], [b, c], [c, a]] as [number, number][]).forEach(([p, q]) => {
    const k = p < q ? `${p}_${q}` : `${q}_${p}`;
    if (!seen.has(k)) { seen.add(k); edges.push([p, q]); }
  }));
  return { verts, edges };
}
const SPHERE = icosphere(2);
const spin = (v: V, ax: number, ay: number): V => {
  const [x, y, z] = v;
  const x1 = x * Math.cos(ay) + z * Math.sin(ay), z1 = -x * Math.sin(ay) + z * Math.cos(ay);
  const y1 = y * Math.cos(ax) - z1 * Math.sin(ax), z2 = y * Math.sin(ax) + z1 * Math.cos(ax);
  return [x1, y1, z2];
};
function rayToOutline(out: P[], c: P, th: number) {
  const dx = Math.cos(th), dy = Math.sin(th);
  let best = 1e9;
  out.forEach((p, i) => {
    const q = out[(i + 1) % out.length];
    const ex = q[0] - p[0], ey = q[1] - p[1];
    const den = dx * ey - dy * ex;
    if (Math.abs(den) < 1e-6) return;
    const t = ((p[0] - c[0]) * ey - (p[1] - c[1]) * ex) / den;
    const u = ((p[0] - c[0]) * dy - (p[1] - c[1]) * dx) / den;
    if (t > 0 && u >= 0 && u <= 1 && t < best) best = t;
  });
  return best;
}
function warpMesh(out: P[], c: P, ax: number, ay: number, frontOnly: boolean) {
  const proj = SPHERE.verts.map(v => {
    const r = spin(v, ax, ay);
    const rho = Math.min(1, Math.hypot(r[0], r[1]));
    const th = Math.atan2(r[1], r[0]);
    const R = rayToOutline(out, c, th);
    return { x: c[0] + Math.cos(th) * rho * R, y: c[1] + Math.sin(th) * rho * R, z: r[2] };
  });
  return SPHERE.edges
    .filter(([a, b]) => !frontOnly || (proj[a].z > -0.02 && proj[b].z > -0.02))
    .map(([a, b]) => `M${proj[a].x.toFixed(1)} ${proj[a].y.toFixed(1)}L${proj[b].x.toFixed(1)} ${proj[b].y.toFixed(1)}`).join('');
}
const polyStr = (o: P[]) => o.map(p => p.join(',')).join(' ');

const WireBlob: React.FC<{ out: P[]; c: P; ax: number; ay: number }> = ({ out, c, ax, ay }) => (
  <g fill="none" stroke="#fff">
    <path d={warpMesh(out, c, ax, ay, false)} strokeWidth="1" />
    <polygon points={polyStr(out)} strokeWidth="2" strokeLinejoin="round" />
  </g>
);

const zoomed = (pts: P[], ox: number, oy: number): P[] => pts.map(([x, y]) => [ox + x / 3, oy + y / 3] as P);
const OUT_TL = zoomed([[92, 240], [110, 180], [150, 140], [210, 105], [300, 85], [400, 82], [460, 110], [490, 170], [500, 210], [470, 260], [400, 320], [300, 360], [200, 380], [130, 340], [100, 290]], 400, 220);
const OUT_TR: P[] = [[1231, 330], [1238, 310], [1262, 297], [1300, 292], [1345, 298], [1366, 318], [1369, 345], [1350, 360], [1325, 370], [1280, 372], [1250, 362], [1235, 350]];
const OUT_BL: P[] = [[453, 745], [465, 720], [490, 707], [520, 703], [545, 725], [555, 745], [545, 765], [520, 785], [490, 787], [465, 775]];
const OUT = zoomed([[80, 470], [130, 400], [200, 310], [280, 220], [360, 150], [430, 120], [500, 100], [560, 88], [610, 92], [640, 150], [680, 230], [715, 300], [715, 390], [640, 490], [550, 525], [430, 550], [320, 580], [200, 585], [110, 535], [82, 510]], 1100, 630);
const meshPath = warpMesh(OUT, [1242, 755], 0.4, 0.7, true);

function gridPath() {
  const L = [955, 741], T = [1335, 600], R = [1718, 741], B = [1335, 1019];
  const sx = L[0] - T[0] + R[0] - B[0], sy = L[1] - T[1] + R[1] - B[1];
  const dx1 = T[0] - R[0], dx2 = B[0] - R[0], dy1 = T[1] - R[1], dy2 = B[1] - R[1];
  const det = dx1 * dy2 - dx2 * dy1;
  const g = (sx * dy2 - dx2 * sy) / det, h = (dx1 * sy - sx * dy1) / det;
  const a = T[0] - L[0] + g * T[0], b = B[0] - L[0] + h * B[0], c = L[0];
  const d = T[1] - L[1] + g * T[1], e = B[1] - L[1] + h * B[1], f = L[1];
  const map = (u: number, v: number) => { const w = g * u + h * v + 1; return `${((a * u + b * v + c) / w).toFixed(1)} ${((d * u + e * v + f) / w).toFixed(1)}`; };
  const N = 12;
  let thin = '', axis = '';
  for (let i = 0; i <= N; i++) {
    const t = i / N;
    const s = `M${map(t, 0)}L${map(t, 1)}M${map(0, t)}L${map(1, t)}`;
    if (i === N / 2) axis = s; else thin += s;
  }
  return { thin, axis };
}
const GRID = gridPath();

/* gizmo helpers */
const GTxt: React.FC<{ x: number; y: number; c: string; t: string }> = ({ x, y, c, t }) => <text x={x} y={y} fontSize="10" fill={c} fontFamily="Liberation Sans">{t}</text>;
const MiniAxis: React.FC<{ x: number; y: number; v: string; h: string; vl: string; hl: string }> = ({ x, y, v, h, vl, hl }) => (
  <g fontSize="8" fontFamily="Liberation Sans">
    <path d={`M${x} ${y}v-22`} stroke={v} /><path d={`M${x} ${y}h22`} stroke={h} />
    <path d={`M${x - 2} ${y - 19}l2-5 2 5z`} fill={v} /><path d={`M${x + 19} ${y - 2}l5 2-5 2z`} fill={h} />
    <text x={x - 2} y={y - 26} fill={v}>{vl}</text><text x={x + 26} y={y + 2} fill={h}>{hl}</text>
  </g>
);
const Cube: React.FC<{ cx: number; cy: number; t: string }> = ({ cx, cy, t }) => (
  <g>
    <ellipse cx={cx} cy={cy + 17} rx="37" ry="4" fill="none" stroke="#8c8c8c" strokeWidth="1.5" strokeDasharray="14 3" />
    <rect x={cx - 15} y={cy - 15} width="31" height="31" fill="#6e7176" />
    <text x={cx} y={cy + 6} fontSize="15" textAnchor="middle" fill="#55585c" fontFamily="Noto Sans CJK SC">{t}</text>
  </g>
);
const Label3 = ({ a, b, c }: { a: string; b: string; c: string }) => <ViewLabel>[{a}][{b}][{c}]</ViewLabel>;

const Deer = () => (
  <svg width="32" height="44" viewBox="0 0 30 42">
    <path d="M17 13l4-2 3 1-4 4v7l3 3 1 15h-2l-2-12-3-2-6 1-2 3-1 10H6l0-11c-1-4-1-7 3-9l6-3z" fill="#cfd6dd" />
    <path d="M9 25l8-3 3 6-8 4z" fill="#8a94a2" /><path d="M8 34l3-3 1 10H9z" fill="#9aa3b0" />
    <g fill="none" stroke="#c8ced6" strokeWidth="1"><path d="M20 11L15 3M18 7l-6-4M18 7l1-6M21 11l6-6M25 8l1-5M25 8l4-3M16 5l-5 1" /></g>
  </svg>
);
const ChipBg: React.FC<{ fill: string }> = ({ fill }) => (
  <ChipShape width="47" height="29" viewBox="0 0 47 29">
    <polygon points="1,1 39,1 46,14.500 39,28 1,28" fill={fill} stroke="#b9cbdc" strokeWidth="1" strokeDasharray="3 2" />
  </ChipShape>
);
const isLatin = (s: string) => /^[\x00-\x7f]+$/.test(s);

export default function App() {
  const t = ToolIcons;
  return (
    <Root>
      <Global />
      <AppButton>
        <svg width="30" height="38" viewBox="0 0 26 32">
          <path d="M2 3l11 5 9 8-9 8-11 5 6-8-1-5-5-3 7 0z" fill="#27a3a0" />
          <path d="M2 3l11 5-3 6-3-2z M2 29l11-5-3-5-3 2z" fill="#0e6462" />
          <path d="M20 18h5l-2.500 3z" fill="#ddd" />
        </svg>
      </AppButton>
      <TitleBar>
        <Qat>
          <File size={14} /><FolderOpen size={14} /><Save size={14} /><Undo2 size={14} /><Redo2 size={14} /><File size={13} />
          <QatLabel>工作区: 默认</QatLabel>
          <ChevronDown size={12} />
        </Qat>
        <TitleText><TitleApp>Autodesk 3ds Max  2014 x64</TitleApp><span>无标题</span></TitleText>
        <InfoCenter>
          ▸
          <InfoIcons><Binoculars size={15} /><Wrench size={15} /><Star size={15} /><CircleHelp size={15} /></InfoIcons>
        </InfoCenter>
        <WinButtons>
          <WinBtn $w={29}>–</WinBtn><WinBtn $w={27}>❐</WinBtn><WinBtn $w={47} $close>X</WinBtn>
        </WinButtons>
      </TitleBar>
      <MenuBar>{menus.map(m => <span key={m}>{m}</span>)}</MenuBar>
      <ToolbarRow>
        <Toolbar>
          <ToolBtn>{t.link}</ToolBtn><ToolBtn>{t.unlink}</ToolBtn><ToolBtn>{t.bind}</ToolBtn>
          <Gap $w={8} $line />
          <Select $w={68}>全部<SelectArrow /></Select>
          <ToolBtn>{t.selObj}</ToolBtn><ToolBtn>{t.selName}</ToolBtn><ToolBtn>{t.rect}</ToolBtn><ToolBtn>{t.win}</ToolBtn>
          <Gap $w={6} $line />
          <ToolBtn $on>{t.move}</ToolBtn><ToolBtn>{t.rotate}</ToolBtn><ToolBtn>{t.scale}</ToolBtn>
          <Gap $w={2} />
          <Select $w={67}>视图<SelectArrow /></Select>
          <Gap $w={2} />
          <ToolBtn>{t.pivot}</ToolBtn>
          <Gap $w={5} $line />
          <ToolBtn>{t.axis}</ToolBtn><Gap $w={1} /><ToolBtn $on>{t.manip}</ToolBtn>
          <Gap $w={7} $line />
          <ToolBtn>{t.snap3}</ToolBtn><ToolBtn>{t.snapA}</ToolBtn><ToolBtn>{t.snapP}</ToolBtn><ToolBtn>{t.snapS}</ToolBtn>
          <Gap $w={3} $line />
          <ToolBtn>{t.named}</ToolBtn>
          <Gap $w={3} />
          <Select $w={118} $dark><SelectInner>创建选择集</SelectInner><SelectArrow /></Select>
          <Gap $w={6} $line />
          <ToolBtn>{t.mirror}</ToolBtn><Gap $w={1} /><ToolBtn>{t.align}</ToolBtn>
          <Gap $w={6} $line />
          <ToolBtn>{t.layers}</ToolBtn>
          <Gap $w={6} $line />
          <ToolBtn $on>{t.scene}</ToolBtn><ToolBtn>{t.curve}</ToolBtn><ToolBtn>{t.schem}</ToolBtn>
          <Gap $w={8} $line />
          <ToolBtn>{t.mat}</ToolBtn>
          <Gap $w={4} $line />
          <ToolBtn>{t.renderSet}</ToolBtn><ToolBtn>{t.renderFrame}</ToolBtn><Gap $w={2} /><ToolBtn>{t.render}</ToolBtn>
        </Toolbar>
      </ToolbarRow>
      <RibbonTabs>
        <RibbonTab $w={48}>建模</RibbonTab>
        <RibbonTab $w={97} $on>自由形式</RibbonTab>
        <RibbonTab $w={76}>选择</RibbonTab>
        <RibbonTab $w={102}>对象绘制</RibbonTab>
        <RibbonTab $w={74}>填充</RibbonTab>
        <TabIcon>
          <svg width="14" height="9" viewBox="0 0 14 9"><rect width="14" height="9" rx="2" fill="#e8e8e8" /><path d="M4 3h6l-3 3z" fill="#333" /></svg>
          <svg width="5" height="4" viewBox="0 0 5 4"><path d="M0 0h5L2.500 3z" fill="#aaa" /></svg>
        </TabIcon>
      </RibbonTabs>
      <RibbonPanel />
      <Main>
        <LeftArea>
          <UpperRow>
            <BlueRail>
              <DeerBox><Deer /></DeerBox>
              {chips.map(c => <Chip key={c}><ChipBg fill="#36587f" /><ChipLabel>{c}</ChipLabel></Chip>)}
              <Spacer />
              <Chip $start><ChipBg fill="#1f93c4" /><ChipLabel>启动</ChipLabel></Chip>
            </BlueRail>
            <IconRail>
              {railIcons.map((ic, i) => ic === 'sep' ? <RailSep key={i} /> : <RailCell key={i}>{ic}</RailCell>)}
            </IconRail>
            <DarkRail>
              <Spacer />
              <PlayBtn><svg width="7" height="10" viewBox="0 0 7 10"><path d="M0 0l7 5-7 5z" fill="#ddd" /></svg></PlayBtn>
              <LayoutBtn><LayoutCell /><LayoutCell /><LayoutCell /><LayoutCell /></LayoutBtn>
            </DarkRail>
            <ContentCol>
              <ViewGrid>
                <Viewport $ax={397} $ay={200}>
                  <ViewSvg viewBox="138 128 795 402">
                    <WireBlob out={OUT_TL} c={[498, 297]} ax={0.5} ay={0.3} />
                    <path d="M463 215v74h72" fill="none" stroke="#f4e26a" strokeWidth="1.500" />
                    <rect x="463" y="256" width="33" height="33" fill="#d8cf50" opacity=".55" />
                    <path d="M534 284l26 5-26 5z" fill="#c00" />
                    <path d="M463 200l-4 18h8z" fill="#1f9a1f" />
                    <GTxt x={460} y={186} c="#7fd05f" t="y" />
                    <MiniAxis x={165} y={505} v="#2e9a2e" h="#c22" vl="y" hl="x" />
                    <circle cx="877" cy="181" r="33" fill="none" stroke="#7e7e7e" strokeWidth="5" />
                    <circle cx="877" cy="181" r="27" fill="none" stroke="#5a5a5a" strokeWidth="2" />
                    <rect x="862" y="166" width="30" height="30" fill="#686a6e" />
                    <text x="877" y="187" fontSize="15" textAnchor="middle" fill="#525458" fontFamily="Noto Sans CJK SC">顶</text>
                  </ViewSvg>
                  <Label3 a="+" b="顶" c="线框" />
                </Viewport>
                <Viewport $ax={397} $ay={200}>
                  <ViewSvg viewBox="939 128 797 402">
                    <WireBlob out={OUT_TR} c={[1300, 332]} ax={1.2} ay={0.3} />
                    <path d="M1264 290v81h70" fill="none" stroke="#f4e26a" strokeWidth="1.500" />
                    <path d="M1264 260l-6 38h12z" fill="#1528c8" />
                    <GTxt x={1261} y={268} c="#5a78e0" t="z" />
                    <path d="M1337 365l24 5-24 6z" fill="#c00" />
                    <GTxt x={1363} y={366} c="#f0d060" t="x" />
                    <rect x="1257" y="364" width="14" height="14" fill="none" stroke="#c8c8c8" />
                    <MiniAxis x={966} y={505} v="#2b50c8" h="#c22" vl="z" hl="x" />
                    <Cube cx={1679} cy={181} t="前" />
                  </ViewSvg>
                  <Label3 a="+" b="前" c="线框" />
                </Viewport>
                <Viewport $ax={397} $ay={201}>
                  <ViewSvg viewBox="138 539 795 406">
                    <WireBlob out={OUT_BL} c={[503, 746]} ax={0.7} ay={0.9} />
                    <path d="M496 705v76h-76" fill="none" stroke="#f4e26a" strokeWidth="1.500" />
                    <path d="M496 686l-6 26h12z" fill="#1528c8" />
                    <GTxt x={493} y={680} c="#5a78e0" t="z" />
                    <path d="M402 781l22-5v10z" fill="#1f9a1f" />
                    <GTxt x={395} y={778} c="#7fd05f" t="y" />
                    <rect x="490" y="778" width="14" height="12" fill="none" stroke="#c8c8c8" />
                    <MiniAxis x={165} y={917} v="#2b50c8" h="#2e9a2e" vl="z" hl="y" />
                    <Cube cx={877} cy={593} t="左" />
                  </ViewSvg>
                  <Label3 a="+" b="左" c="线框" />
                </Viewport>
                <PerspView>
                  <ViewSvg viewBox="939 539 797 406">
                    <defs>
                      <radialGradient id="rock" gradientUnits="userSpaceOnUse" cx="1208" cy="767" r="115">
                        <stop offset="0" stopColor="#dba680" /><stop offset=".2" stopColor="#b98240" /><stop offset=".55" stopColor="#a66f22" /><stop offset="1" stopColor="#8e6420" />
                      </radialGradient>
                    </defs>
                    <path d={GRID.thin} fill="none" stroke="#6f6f6f" strokeWidth="1" />
                    <path d={GRID.axis} fill="none" stroke="#050505" strokeWidth="1.200" />
                    <polygon points={polyStr(OUT)} fill="url(#rock)" />
                    <path d="M1165 826l45-8 45-9 40-4 35-22 8-4-18 17-40 12-50 9-40 6z" fill="#2e2110" opacity=".85" />
                    <path d="M1129 788l40-50 55-55 35-18-30 60-35 45-25 30z" fill="#6e5620" opacity=".45" />
                    <path d={meshPath} fill="none" stroke="#f5ecb4" strokeWidth=".9" opacity=".85" />
                    <polygon points={polyStr(OUT)} fill="none" stroke="#fff" strokeWidth="1.400" />
                    <path d="M1128 802l50 30 45-30M1165 815l30-20 30 15-25 20z" fill="none" stroke="#f4e850" strokeWidth="1.200" />
                    <path d="M1162 818l27-12 28 11-24 10z" fill="#b4aa40" opacity=".7" />
                    <path d="M1180 805v-50M1180 805l-17-10M1180 805l27-12v25" fill="none" stroke="#3a22a0" strokeWidth="1.200" />
                    <path d="M1207 793v25" stroke="#c00" strokeWidth="1.500" />
                    <path d="M1177 750l-5 22h10z" fill="#1528c8" />
                    <GTxt x={1173} y={745} c="#5a78e0" t="z" />
                    <path d="M1128 797l16 8-6 5z" fill="#1f9a1f" />
                    <path d="M1258 796l-22 7 4 7z" fill="#c00" />
                    <rect x="1177" y="825" width="15" height="16" fill="none" stroke="#c8c8c8" />
                    <MiniAxis x={966} y={918} v="#2b50c8" h="#c22" vl="z" hl="x" />
                    <ellipse cx="1679" cy="609" rx="34" ry="17" fill="#2c2c2c" stroke="#8c8c8c" strokeWidth="3" />
                    <path d="M1679 574l19 9v21l-19 11-19-11v-21z" fill="#888" />
                    <path d="M1679 574l19 9-19 10-19-10z" fill="#b4b4b4" />
                    <path d="M1679 593l19-10v21l-19 11z" fill="#6a6a6a" />
                  </ViewSvg>
                  <Label3 a="+" b="透视" c="真实" />
                </PerspView>
              </ViewGrid>
              <SliderRow>
                <SliderEnd>&lt;</SliderEnd>
                <SliderThumb>0 / 100</SliderThumb>
                <SliderEnd>&gt;</SliderEnd>
              </SliderRow>
              <TrackRow>
                <TrackIcon>
                  <svg width="20" height="18" viewBox="0 0 20 18"><rect x=".5" y=".5" width="18" height="7" fill="none" stroke="#ccc" /><path d="M3 4q3-3 6 0t6 0" stroke="#ccc" fill="none" /><path d="M1 16h18M5 9v5M2 12l3 2 3-2M14 9v5M11 11l3-2 3 2" stroke="#ccc" fill="none" /></svg>
                </TrackIcon>
                <Ruler>
                  <KeyMark>0</KeyMark>
                  {Array.from({ length: 17 }, (_, i) => <RulerCell key={i}><RulerNum>{(i + 1) * 5}</RulerNum></RulerCell>)}
                </Ruler>
              </TrackRow>
            </ContentCol>
          </UpperRow>
          <StatusArea>
            <Listener><ListenerTop /><ListenerBottom>OK</ListenerBottom></Listener>
            <StatusRows>
              <StatusRow>
                <StatusBox $w={921}>选择了 1 个对象</StatusBox>
                <IconSlot $w={27}><svg width="10" height="18" viewBox="0 0 10 18"><ellipse cx="5" cy="6" rx="4.500" ry="5.500" fill="#e89a9a" /><path d="M5 11v6" stroke="#ddd" strokeWidth="1.500" /></svg></IconSlot>
                <IconSlot $w={28}><svg width="11" height="16" viewBox="0 0 11 16"><path d="M2.500 7V4a3 3 0 0 1 6 0v3" fill="none" stroke="#ddd" strokeWidth="1.500" /><rect x="1" y="7" width="9" height="8" fill="#d8c080" /></svg></IconSlot>
                <IconSlot $w={27}><svg width="15" height="15" viewBox="0 0 15 15"><rect width="15" height="15" fill="#e4e4e4" /><path d="M7.500 1v13M1 7.500h13" stroke="#555" /><rect x="5" y="5" width="5" height="5" fill="#333" /></svg></IconSlot>
                <AxisLabel>X:</AxisLabel><Field>-36.822</Field><Spin><SpinUp /><SpinDown /></Spin>
                <AxisLabel>Y:</AxisLabel><Field>19.924</Field><Spin><SpinUp /><SpinDown /></Spin>
                <AxisLabel>Z:</AxisLabel><Field>-20.98</Field><Spin><SpinUp /><SpinDown /></Spin>
                <StatusBox $w={100} $ml={2}>栅格 = 10.0</StatusBox>
                <StatusBox $w={276} $ml={4} />
              </StatusRow>
              <StatusRow>
                <StatusBox $w={1226}>单击并拖动以选择并移动对象</StatusBox>
                <IconSlot $w={20} $ml={2} $on><svg width="14" height="16" viewBox="0 0 14 16"><rect x="3" y="1" width="8" height="14" fill="#ddd" stroke="#222" /><rect x="1" y="4" width="10" height="9" fill="none" stroke="#222" /></svg></IconSlot>
                <StatusBox $w={100} $ml={3}>添加时间标记</StatusBox>
                <StatusBox $w={42} $ml={3} />
                <KeyBtn $w={65} $ml={4}>设置关键点</KeyBtn>
                <IconSlot $w={28} $ml={3}><svg width="22" height="18" viewBox="0 0 22 18"><path d="M2 6l5 10 6-14 6 9" fill="none" stroke="#d08a9a" /><path d="M16 17l3-3v3z" fill="#fff" /></svg></IconSlot>
                <KeyBtn $w={85}>关键点过滤器...</KeyBtn>
                <IconSlot $w={22} $ml={6}><svg width="20" height="10" viewBox="0 0 20 10"><path d="M1 0v10M10 0L3 5l7 5zM12 0l7 5-7 5z" fill="#ddd" stroke="#ddd" strokeWidth=".6" /></svg></IconSlot>
              </StatusRow>
            </StatusRows>
          </StatusArea>
        </LeftArea>
        <RightPanel>
          <PanelTabs>
            {panelIcons.map((ic, i) => <PanelTab key={i} $on={i === 1}>{ic}</PanelTab>)}
          </PanelTabs>
          <NameRow><NameField>GeoSphere001</NameField><Swatch /></NameRow>
          <StackBox>
            <StackArrow><svg width="9" height="5" viewBox="0 0 9 5"><path d="M0 0h9L4.500 5z" fill="#111" /></svg></StackArrow>
          </StackBox>
          <ListWrap>
            <ListRows>
              {mods.map((m, i) => <ListRow key={i} $on={i === 19} $latin={isLatin(m)}>{m}</ListRow>)}
              {Array.from({ length: 7 }, (_, i) => <ListRow key={`h${i}`} />)}
              <ListRow $indent={66}>建器</ListRow>
            </ListRows>
            <ScrollTrack>
              <ScrollBtn><svg width="9" height="5" viewBox="0 0 9 5"><path d="M0 5h9L4.500 0z" fill="#555" /></svg></ScrollBtn>
              <ScrollGap $h={227} />
              <ScrollThumb><Grip /></ScrollThumb>
              <ScrollGap $h={198} />
              <ScrollBtn><svg width="9" height="5" viewBox="0 0 9 5"><path d="M0 0h9L4.500 5z" fill="#555" /></svg></ScrollBtn>
            </ScrollTrack>
          </ListWrap>
        </RightPanel>
      </Main>
      <Taskbar>
        <Orb />
        <TaskTab $w={158} $ml={16}><TaskDot $c="#2f80c8" /></TaskTab>
        <TaskDot $c="#f4f4f4" $w={30} $ml={18} />
        <TaskDot $c="#d04a58" $w={20} $ml={38} />
        <TaskTab $w={158} $ml={25}><TaskDot $c="#e8c888" /></TaskTab>
        <TaskTab $w={158} $ml={4}><TaskDot $c="#20a858" /></TaskTab>
        <TaskTab $w={158} $ml={4}><TaskDot $c="#2f90d8" /></TaskTab>
        <TaskTab $w={158} $ml={4}><TaskDot $c="#7fa0b8" /></TaskTab>
        <TaskTab $w={158} $ml={4}><TaskDot $c="#e8b860" /></TaskTab>
      </Taskbar>

      <RedArrow width="92" height="30" viewBox="0 0 92 30">
        <path d="M5 20L66 15 66 6 90 16 68 27 67 21z" fill="#ea3a32" />
      </RedArrow>
      <Watermark>
        <svg width="64" height="66" viewBox="0 0 64 66">
          <path d="M10 4C20 2 50 22 60 30c3 3 3 6 0 9C50 47 30 60 18 63c-8 1-13-1-13-6V12c0-4 2-7 5-8z" fill="none" stroke="#c9cbd0" strokeWidth="5" strokeLinejoin="round" />
          <path d="M14 8v46a6 6 0 0 0 10 3" fill="none" stroke="#c9cbd0" strokeWidth="5" strokeLinecap="round" />
          <path d="M24 22l16 10-16 10z" fill="#c9cbd0" /><rect x="43" y="22" width="3" height="20" fill="#c9cbd0" />
        </svg>
        <MarkText>
          <MarkTitle>溜溜自学</MarkTitle>
          <MarkSub>ZiXUE.3D66.COM</MarkSub>
        </MarkText>
      </Watermark>
      <ImeBar>
        <ImeS>S</ImeS><ImeText>中</ImeText><ImeText>°,</ImeText>
        <ImePill>(ஐ<ImeHint>拒绝</ImeHint></ImePill>
        <ImeGrid><ImeDot /><ImeDot /><ImeDot /><ImeDot /></ImeGrid>
      </ImeBar>
    </Root>
  );
}
